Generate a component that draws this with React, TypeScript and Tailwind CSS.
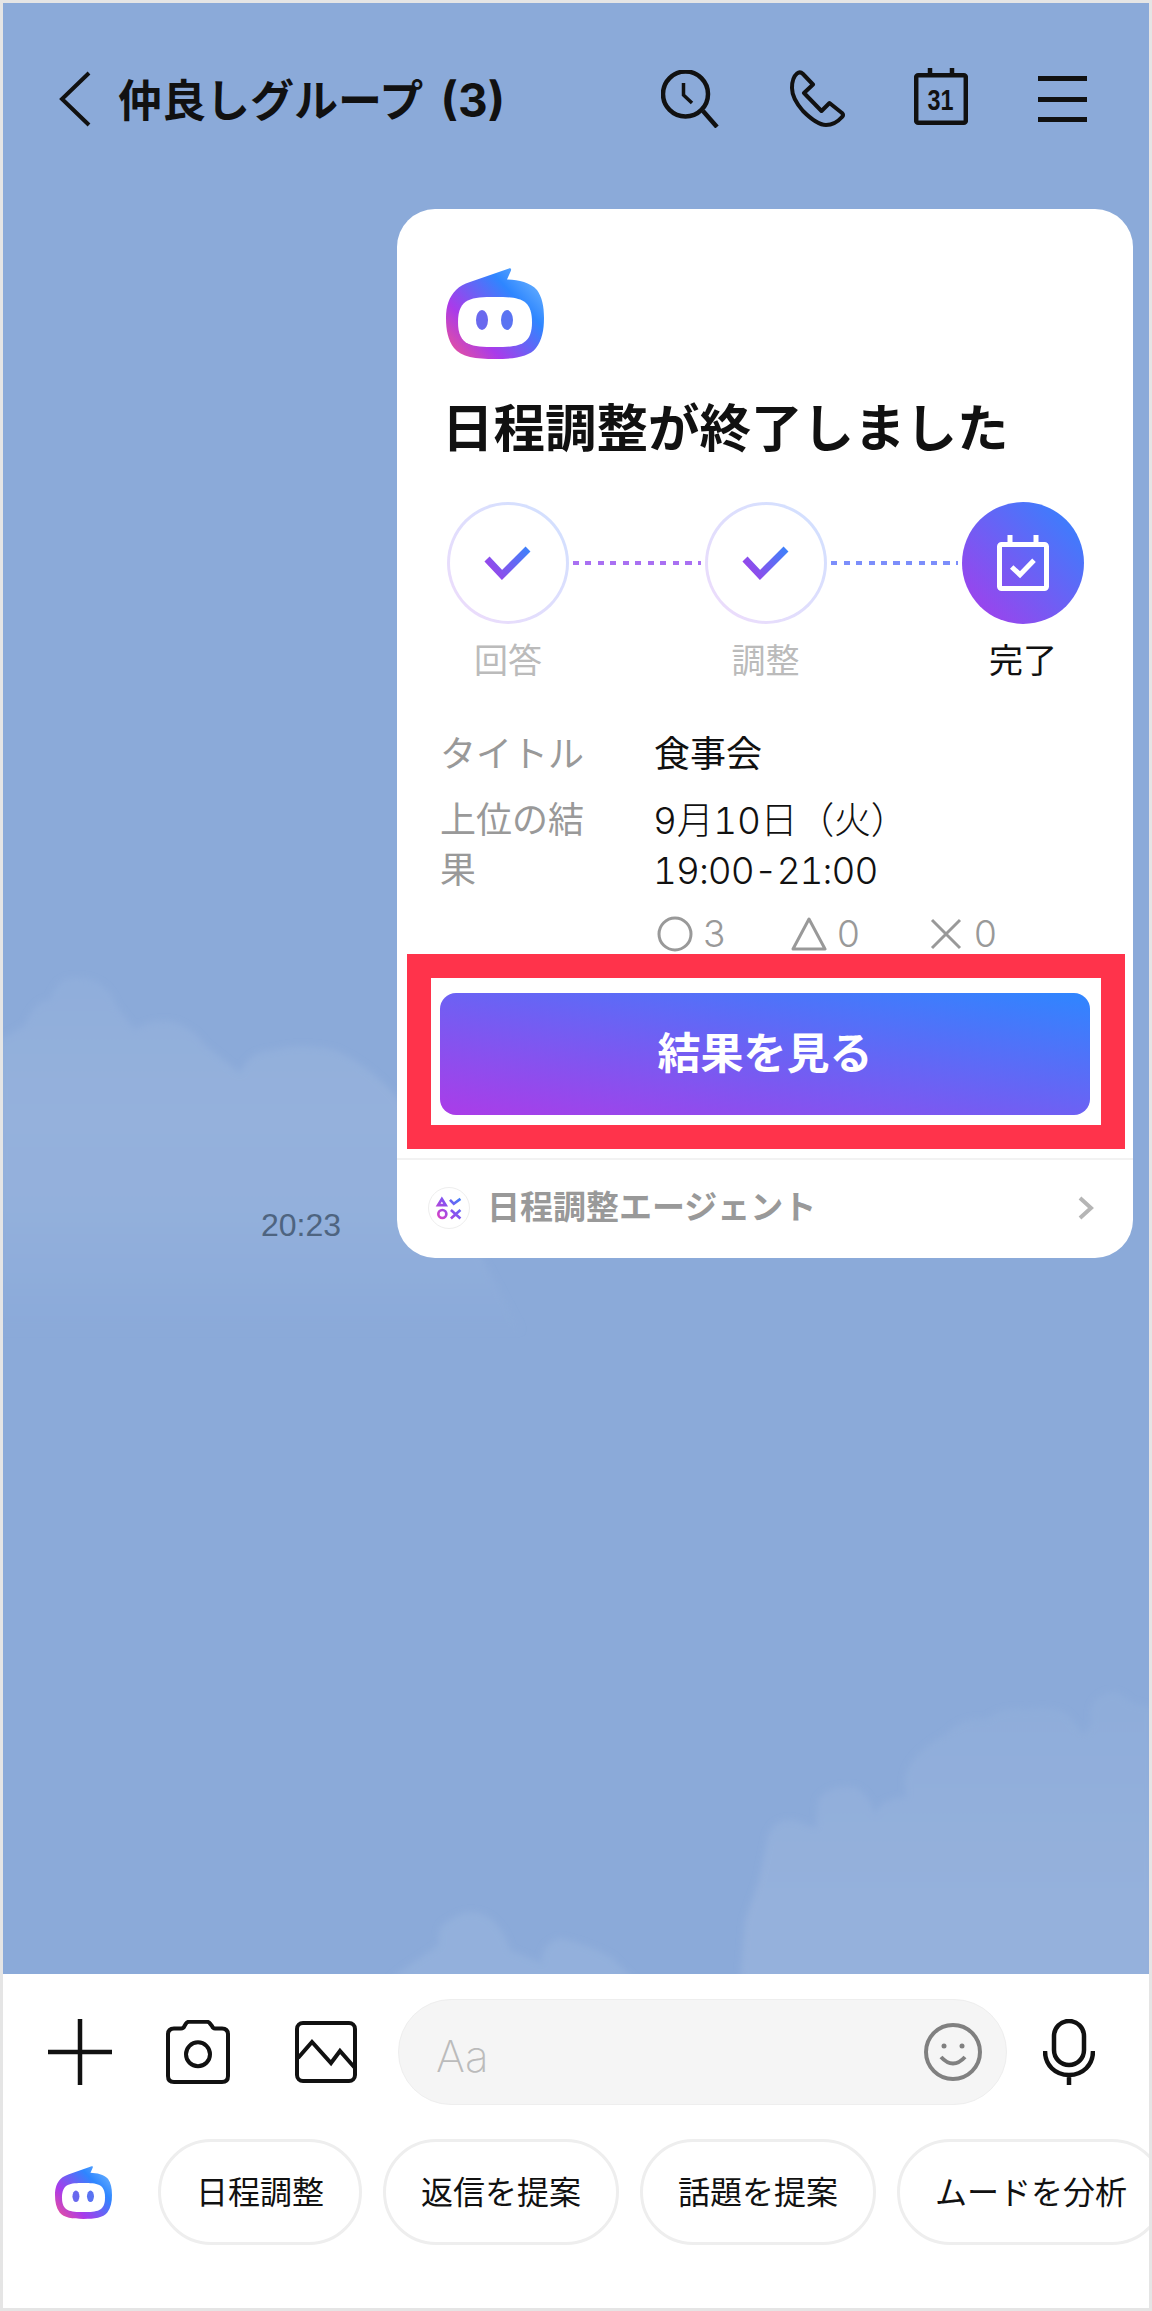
const CHIPS = ['日程調整', '返信を提案', '話題を提案', 'ムードを分析'];

function Logo({ id, className }: { id: string; className: string }) {
  return (
    <svg viewBox="0 0 98 91" className={className}>
      <defs>
        <linearGradient id={id} gradientUnits="userSpaceOnUse" x1="92" y1="10" x2="8" y2="88">
          <stop offset="0" stopColor="#6ab2ff" />
          <stop offset="0.26" stopColor="#2e86ff" />
          <stop offset="0.72" stopColor="#a93bea" />
          <stop offset="1" stopColor="#e5509f" />
        </linearGradient>
      </defs>
      <path
        fill={`url(#${id})`}
        d="M63 .5C64.500 0 65.500 1 65 2.500L61 11.500C72 12 84 14 91 22C96 29 98 38 98 50C98 62 96 72 90 80C83 89 68 91 49 91C30 91 15 89 8 80C2 72 0 62 0 50C0 38 3 29 10 22C14 18 18 16 24 14Z"
      />
      <path fill="#fff" d="M49 29C72 29 86 30 86 54C86 78 72 79 49 79C26 79 12 78 12 54C12 30 26 29 49 29Z" />
      <ellipse cx="36" cy="52" rx="6" ry="10" fill="#6a69ee" />
      <ellipse cx="61" cy="52" rx="6" ry="10" fill="#5a73f2" />
    </svg>
  );
}

function Clouds() {
  return (
    <svg viewBox="3 3 1146 1971" className="absolute inset-0 h-full w-full">
      <defs>
        <linearGradient id="cloud-a" gradientUnits="userSpaceOnUse" x1="0" y1="980" x2="0" y2="1330">
          <stop offset="0" stopColor="#90aedb" />
          <stop offset="0.4" stopColor="#95b1dc" />
          <stop offset="0.65" stopColor="#93b0dc" />
          <stop offset="1" stopColor="#8baad9" />
        </linearGradient>
        <linearGradient id="cloud-b" gradientUnits="userSpaceOnUse" x1="0" y1="1700" x2="0" y2="1900">
          <stop offset="0" stopColor="#8fadda" />
          <stop offset="1" stopColor="#95b1dc" />
        </linearGradient>
        <filter id="cloud-blur">
          <feGaussianBlur stdDeviation="3" />
        </filter>
      </defs>
      <g filter="url(#cloud-blur)">
        <path
          fill="url(#cloud-a)"
          d="M0 1040L25 1025Q35 1000 50 1000Q58 978 72 978Q105 975 117 1007L135 1030Q150 1018 175 1022Q195 1030 205 1045L240 1073Q250 1050 275 1050Q300 1042 335 1050Q365 1062 397 1097L520 1330H0Z"
        />
        <path
          fill="url(#cloud-b)"
          d="M740 1980L745 1920L759 1880L768 1835Q775 1818 794 1820L816 1828L818 1800Q830 1784 855 1787Q870 1795 875 1815Q880 1798 907 1797Q900 1775 915 1758Q930 1742 945 1735Q965 1715 985 1720Q1005 1705 1025 1710Q1055 1705 1068 1715L1084 1735L1092 1722Q1088 1708 1098 1698Q1115 1685 1130 1702L1152 1708V1980Z"
        />
        <path
          fill="#93b0dc"
          d="M390 1980L405 1968L439 1945Q436 1925 450 1920Q470 1905 490 1918Q505 1930 510 1950L542 1963Q540 1945 560 1938Q590 1945 611 1957L635 1980Z"
        />
      </g>
    </svg>
  );
}

function HeaderIcons() {
  return (
    <div className="ml-auto mr-[62px] flex items-center text-[#111]">
      <svg viewBox="0 0 58 58" className="h-[58px] w-[58px]" fill="none" stroke="currentColor" strokeWidth="4.500">
        <circle cx="24.500" cy="24" r="22.500" />
        <path d="M42 41L56 57" />
        <path d="M22.500 13V25L31 33" strokeWidth="3.500" />
      </svg>
      <svg viewBox="0 0 56 58" className="ml-[71px] h-[58px] w-[56px]" fill="none" stroke="currentColor" strokeWidth="4" strokeLinejoin="round">
        <path d="M7 3.500Q10 1 13 4L23 14.500L14 23L31.500 41L39.500 33L52 43Q54 45 52 47Q45 55 36 55C30 55 22 50 13 41C6 33 2 26 2 18C2 11 4 6 7 3.500Z" />
      </svg>
      <svg viewBox="0 0 54 58" className="-mt-[4px] ml-[68px] h-[58px] w-[54px]" fill="none" stroke="currentColor" strokeWidth="4.500">
        <rect x="2.200" y="7.200" width="49.600" height="47.600" rx="2" />
        <path d="M16 0V7M38 0V7" />
        <text
          x="26.500"
          y="42"
          textAnchor="middle"
          textLength="26"
          lengthAdjust="spacingAndGlyphs"
          fill="currentColor"
          stroke="none"
          className="font-[family-name:'Liberation_Sans',sans-serif] text-[30px] font-bold"
        >
          31
        </text>
      </svg>
      <div className="ml-[70px] flex h-[46px] w-[49px] flex-col justify-between">
        <div className="h-[5px] bg-[#111]" />
        <div className="h-[5px] bg-[#111]" />
        <div className="h-[5px] bg-[#111]" />
      </div>
    </div>
  );
}

function DoneStep({ id, label }: { id: string; label: string }) {
  return (
    <div className="flex w-[122px] shrink-0 flex-col items-center">
      <div className="h-[122px] w-[122px] rounded-full bg-linear-to-tr/srgb from-[#efdcfb] to-[#cfe0ff] p-[3px]">
        <div className="flex h-full w-full items-center justify-center rounded-full bg-white">
          <svg viewBox="0 0 48 34" className="h-[34px] w-[48px]" fill="none">
            <defs>
              <linearGradient id={id} gradientUnits="userSpaceOnUse" x1="4" y1="32" x2="46" y2="2">
                <stop offset="0" stopColor="#a33fe8" />
                <stop offset="1" stopColor="#3a84fb" />
              </linearGradient>
            </defs>
            <path d="M3 13L18 29L44 3" stroke={`url(#${id})`} strokeWidth="7" />
          </svg>
        </div>
      </div>
      <div className="mt-[15px] text-[34px] leading-[44px] text-[#bbb]">{label}</div>
    </div>
  );
}

function Stepper() {
  return (
    <div className="ml-[50px] mt-[43px] flex items-start">
      <DoneStep id="check-a" label="回答" />
      <div className="mx-[4px] mt-[59px] h-[4px] w-[127.500px] shrink-0 bg-[repeating-linear-gradient(90deg,#a970f2_0_6px,transparent_6px_12.500px)]" />
      <DoneStep id="check-b" label="調整" />
      <div className="mx-[4px] mt-[59px] h-[4px] w-[127.500px] shrink-0 bg-[repeating-linear-gradient(90deg,#7c8efb_0_6px,transparent_6px_12.500px)]" />
      <div className="flex w-[122px] shrink-0 flex-col items-center">
        <div className="flex h-[122px] w-[122px] items-center justify-center rounded-full bg-linear-to-tr/srgb from-[#a93bea] to-[#2e86ff]">
          <svg viewBox="0 0 60 60" className="h-[60px] w-[60px]" fill="none" stroke="#fff" strokeWidth="5">
            <rect x="6.500" y="11.500" width="47" height="44" rx="2" />
            <path d="M17 2V10M43 2V10" />
            <path d="M18.700 34L27 41.700L41 27.300" />
          </svg>
        </div>
        <div className="mt-[15px] text-[34px] leading-[44px] text-[#111]">完了</div>
      </div>
    </div>
  );
}

function Details() {
  return (
    <div className="ml-[43px] mt-[47px] grid grid-cols-[152px_1fr] gap-x-[62px] gap-y-[16px] text-[36px] leading-[50px]">
      <div className="text-[#999]">タイトル</div>
      <div className="text-[#111]">食事会</div>
      <div className="text-[#999]">上位の結果</div>
      <div className="font-[family-name:Inter,'Noto_Sans_CJK_JP',sans-serif] text-[37px] font-light tabular-nums text-[#111]">
        <div className="-ml-[1px] tracking-[-0.3px]">9月10日（火）</div>
        <div className="-ml-[1px] tracking-[-1px]">19:00-21:00</div>
      </div>
      <div className="col-start-2 -mt-[3px] flex items-center font-[family-name:Inter,sans-serif] text-[37px] font-light text-[#999]">
        <svg viewBox="0 0 36 36" className="ml-[3px] h-[36px] w-[36px]" fill="none" stroke="currentColor" strokeWidth="3">
          <circle cx="18" cy="18" r="16" />
        </svg>
        <span className="ml-[10px] w-[25px]">3</span>
        <svg viewBox="0 0 36 36" className="ml-[63px] h-[36px] w-[36px]" fill="none" stroke="currentColor" strokeWidth="3" strokeLinejoin="round">
          <path d="M18 3L34 33H2Z" />
        </svg>
        <span className="ml-[10px] w-[25px]">0</span>
        <svg viewBox="0 0 32 32" className="ml-[68px] h-[32px] w-[32px]" fill="none" stroke="currentColor" strokeWidth="3">
          <path d="M2 2L30 30M30 2L2 30" />
        </svg>
        <span className="ml-[12px] w-[25px]">0</span>
      </div>
    </div>
  );
}

function AgentFooter() {
  return (
    <div className="flex h-[98px] items-center pb-[3px] pl-[31px] pr-[38px]">
      <div className="h-[42px] w-[42px] shrink-0 rounded-full border border-[#eee]">
        <svg viewBox="0 0 42 42" className="h-full w-full" fill="none" strokeWidth="2.800">
          <defs>
            <linearGradient id="agent-mark" gradientUnits="userSpaceOnUse" x1="8" y1="33" x2="34" y2="10">
              <stop offset="0" stopColor="#e33fc0" />
              <stop offset="0.5" stopColor="#8b4fee" />
              <stop offset="1" stopColor="#3a84fb" />
            </linearGradient>
          </defs>
          <g stroke="url(#agent-mark)">
            <path d="M13.500 11.500L17.500 18H9.500Z" />
            <path d="M22 12.500L26 16.500L33 11.500" />
            <circle cx="14" cy="27.300" r="4.200" />
            <path d="M23 23L33 32M33 23L23 32" />
          </g>
        </svg>
      </div>
      <div className="ml-[17px] text-[33px] font-bold leading-none text-[#999]">日程調整エージェント</div>
      <svg viewBox="0 0 18 24" className="ml-auto h-[24px] w-[18px]" fill="none" stroke="#b5b5b5" strokeWidth="4">
        <path d="M3 2L14 12L3 22" />
      </svg>
    </div>
  );
}

function ScheduleCard() {
  return (
    <div className="relative h-[1049px] w-[736px] shrink-0 rounded-[38px] bg-white">
      <div className="flex flex-col pt-[59px]">
        <Logo id="logo-card" className="ml-[49px] h-[91px] w-[98px]" />
        <h2 className="ml-[45px] mt-[40px] text-[51.500px] font-bold leading-[60px] text-[#111]">日程調整が終了しました</h2>
        <Stepper />
        <Details />
        <button className="mx-[43px] mt-[34px] flex h-[122px] items-center justify-center rounded-[16px] bg-linear-to-tr/srgb from-[#ab3ce8] to-[#2e86ff] text-[43px] font-bold text-white">
          結果を見る
        </button>
        <div className="mt-[43px] h-[2px] bg-[#f2f2f2]" />
        <AgentFooter />
      </div>
      {/* highlight frame drawn on top of the screenshot */}
      <div className="absolute left-[10px] top-[745px] h-[195px] w-[718px] border-[24px] border-[#ff334b]" />
    </div>
  );
}

function Composer() {
  return (
    <div className="h-[334px] bg-white text-[#111]">
      <div className="flex items-center pl-[45px] pt-[25px]">
        <svg viewBox="0 0 64 66" className="h-[66px] w-[64px]" stroke="currentColor" strokeWidth="4.500">
          <path d="M0 33H64M32 0V66" />
        </svg>
        <svg viewBox="0 0 64 64" className="ml-[54px] h-[64px] w-[64px]" fill="none" stroke="currentColor" strokeWidth="4">
          <path d="M8 8.500H15Q17.500 8.500 18.500 6L20 3.500Q21 1.800 23 1.800H41Q43 1.800 44 3.500L46 6Q47 8.500 49 8.500H56Q62 8.500 62 14.500V56Q62 62 56 62H8Q2 62 2 56V14.500Q2 8.500 8 8.500Z" />
          <circle cx="32" cy="34.300" r="12" />
        </svg>
        <svg viewBox="0 0 62 62" className="ml-[65px] h-[62px] w-[62px]" fill="none" stroke="currentColor" strokeWidth="4">
          <rect x="2" y="2" width="58" height="58" rx="6" />
          <path d="M3 37L17 21L36 42L45 30L60 47" />
        </svg>
        <div className="ml-[41px] flex h-[106px] w-[609px] items-center rounded-full border border-[#eee] bg-[#f5f5f5] pl-[37px] pr-[24px]">
          <span className="pt-[8px] font-[family-name:Inter,sans-serif] text-[44px] font-extralight text-[#bbb]">Aa</span>
          <svg viewBox="0 0 58 58" className="ml-auto h-[58px] w-[58px]" fill="none" stroke="#808080" strokeWidth="4">
            <circle cx="29" cy="29" r="27" />
            <circle cx="20" cy="23" r="2.500" fill="#808080" stroke="none" />
            <circle cx="38" cy="23" r="2.500" fill="#808080" stroke="none" />
            <path d="M17 34Q29 47 41 34" />
          </svg>
        </div>
        <svg viewBox="0 0 52 66" className="ml-[36px] h-[66px] w-[52px]" fill="none" stroke="currentColor" strokeWidth="4.500">
          <rect x="11" y="2" width="30" height="44" rx="15" />
          <path d="M2 32C2 46 12 56 26 56C40 56 50 46 50 32M26 56V66" />
        </svg>
      </div>
      <div className="mt-[34px] flex items-center overflow-hidden pl-[52px]">
        <Logo id="logo-bar" className="h-[53px] w-[57px] shrink-0" />
        <div className="ml-[46px] flex shrink-0 gap-[21px]">
          {CHIPS.map(chip => (
            <div
              key={chip}
              className="flex h-[106px] shrink-0 items-center rounded-full border-[3px] border-[#eee] px-[35px] pt-[2px] text-[32px] leading-none text-[#111]"
            >
              {chip}
            </div>
          ))}
        </div>
      </div>
    </div>
  );
}

export default function App() {
  return (
    <div className="h-[2311px] w-[1152px] overflow-hidden border-[3px] border-[#e5e5e5] font-[family-name:'Liberation_Sans','Noto_Sans_CJK_JP',sans-serif]">
      <div className="relative h-[1971px] overflow-hidden bg-[#8baad9]">
        <Clouds />
        <div className="relative">
          <header className="flex h-[192px] items-center">
            <svg viewBox="0 0 32 56" className="ml-[56px] h-[56px] w-[32px]" fill="none" stroke="#111" strokeWidth="4">
              <path d="M30 2L3 28L30 54" />
            </svg>
            <h1 className="ml-[27px] pt-[2px] text-[44px] font-bold leading-none text-[#111]">
              仲良しグループ <span className="ml-[5px] font-[family-name:Inter,sans-serif] text-[46px]">(3)</span>
            </h1>
            <HeaderIcons />
          </header>
          <div className="mt-[14px] flex items-end justify-end pr-[16px]">
            <span className="mb-[17px] mr-[56px] text-[32px] leading-none text-[#4e6480]">20:23</span>
            <ScheduleCard />
          </div>
        </div>
      </div>
      <Composer />
    </div>
  );
}
